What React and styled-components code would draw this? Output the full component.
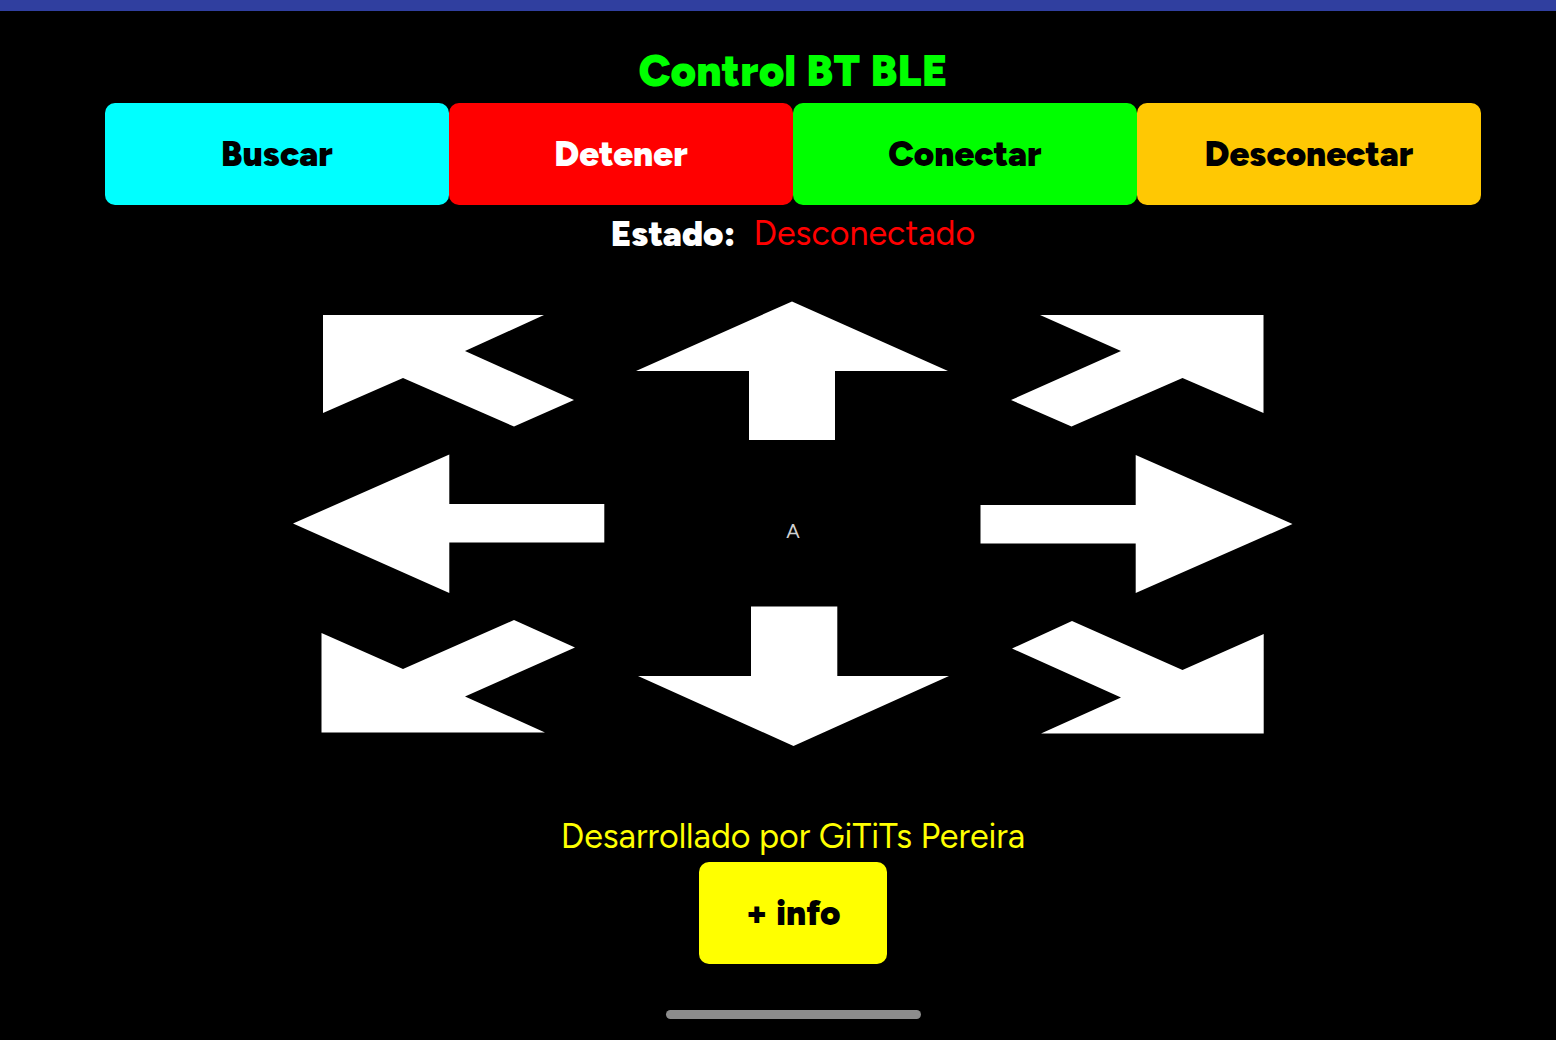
import React from "react";
import styled, { createGlobalStyle } from "styled-components";

const GlobalStyle = createGlobalStyle`
  * { box-sizing: border-box; }
  body {
    margin: 0;
    background: #000;
    font-family: Figtree, Lato, "Open Sans", sans-serif;
  }
  button { font-family: inherit; border: 0; cursor: pointer; }
`;

const Screen = styled.div`
  min-height: 100vh;
  display: flex;
  flex-direction: column;
  background: #000;
`;

const StatusBar = styled.div`
  height: 11px;
  background: #303f9f;
`;

const Content = styled.main`
  flex: 1;
  display: flex;
  flex-direction: column;
  align-items: center;
  padding: 28px 75px 0 105px;
`;

const Title = styled.h1`
  margin: 0;
  color: #00ff00;
  font-size: 44px;
  line-height: 64px;
  font-weight: 900;
`;

const Toolbar = styled.div`
  display: flex;
  align-self: stretch;
`;

const ActionButton = styled.button`
  flex: ${(p) => (p.$fit ? "none" : "1 1 0")};
  height: 102px;
  padding: 0 46px;
  border-radius: 10px;
  background: ${(p) => p.$bg};
  color: ${(p) => p.$color || "#000"};
  font-size: 35px;
  font-weight: 900;
`;

const Status = styled.div`
  display: flex;
  gap: 18px;
  margin-bottom: 31px;
  color: #fff;
  line-height: 58px;
`;

const StatusLabel = styled.span`
  font-size: 35px;
  font-weight: 900;
`;

const StatusValue = styled.span`
  color: #ff0000;
  font-size: 34px;
  font-weight: 400;
`;

const Pad = styled.div`
  width: 75%;
  display: grid;
  grid-template-columns: repeat(3, 1fr);
  grid-auto-rows: 153px;
`;

const PadButton = styled.button`
  display: block;
  padding: 0;
  background: transparent;
`;

const Arrow = styled.svg`
  display: block;
  width: 100%;
  height: 100%;
  fill: #fff;
`;

const Mode = styled.div`
  display: flex;
  align-items: center;
  justify-content: center;
  padding-top: 14px;
  color: #d0d0d0;
  font-size: 20px;
`;

const Credit = styled.p`
  margin: 59px 0 0;
  color: #ffff00;
  font-size: 34px;
  line-height: 50px;
`;

const HomeIndicator = styled.div`
  width: 255px;
  height: 9px;
  margin-top: 46px;
  border-radius: 5px;
  background: #8c8c8c;
`;

const actions = [
  { label: "Buscar", bg: "#00ffff" },
  { label: "Detener", bg: "#ff0000", color: "#fff" },
  { label: "Conectar", bg: "#00ff00" },
  { label: "Desconectar", bg: "#ffc803" },
];

const directions = [
  { name: "Adelante izquierda", points: "46,21 267,21 188,57 297,106 237,132.5 126,84 46,119" },
  { name: "Adelante", points: "171,7.5 327,77 214,77 214,146 128,146 128,77 15,77" },
  { name: "Adelante derecha", points: "75,21 298.5,21 298.5,119 217.5,84 106.5,132.5 46,106 156,57" },
  { name: "Izquierda", points: "16,76.5 172.3,7.5 172.3,57 327.3,57 327.3,95.5 172.3,95.5 172.3,146" },
  null,
  { name: "Derecha", points: "15.5,58 170.7,58 170.7,8 327.5,77 170.7,146 170.7,96.5 15.5,96.5" },
  { name: "Atrás izquierda", points: "44.5,33 126,69 237,20 298,47.5 188,96.5 268,132.5 44.5,132.5" },
  { name: "Atrás", points: "130,6.5 216.3,6.5 216.3,76 328,76 172.5,146 17,76 130,76" },
  { name: "Atrás derecha", points: "47,48.5 107,21 217.5,70 298.7,34 298.7,133.5 76,133.5 156,97.5" },
];

export default function App() {
  return (
    <>
      <GlobalStyle />
      <Screen>
        <StatusBar />
        <Content>
          <Title>Control BT BLE</Title>
          <Toolbar>
            {actions.map((a) => (
              <ActionButton key={a.label} type="button" $bg={a.bg} $color={a.color}>
                {a.label}
              </ActionButton>
            ))}
          </Toolbar>
          <Status>
            <StatusLabel>Estado:</StatusLabel>
            <StatusValue>Desconectado</StatusValue>
          </Status>
          <Pad>
            {directions.map((d) =>
              d ? (
                <PadButton key={d.name} type="button" aria-label={d.name}>
                  <Arrow viewBox="0 0 344 153" preserveAspectRatio="none" aria-hidden="true">
                    <polygon points={d.points} />
                  </Arrow>
                </PadButton>
              ) : (
                <Mode key="mode">A</Mode>
              )
            )}
          </Pad>
          <Credit>Desarrollado por GiTiTs Pereira</Credit>
          <ActionButton type="button" $fit $bg="#ffff00">
            + info
          </ActionButton>
          <HomeIndicator />
        </Content>
      </Screen>
    </>
  );
}
